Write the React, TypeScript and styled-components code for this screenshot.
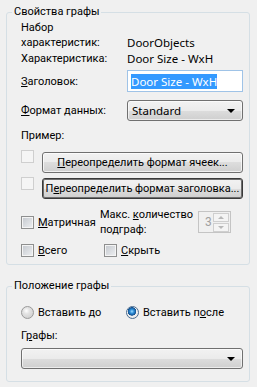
import styled, { createGlobalStyle } from "styled-components";

const GlobalStyle = createGlobalStyle`
  html, body {
    margin: 0;
    padding: 0;
    background: #f0f0f0;
  }
  body {
    font-family: Roboto, "Segoe UI", sans-serif;
    font-size: 11px;
    line-height: 15px;
    color: #000;
  }
`;

const Page = styled.div({
  width: '257px',
  height: '387px',
  boxSizing: 'border-box',
  paddingTop: '4px',
  display: 'flex',
  flexDirection: 'column',
  gap: '13px',
  overflow: 'hidden'
});

const Group = styled.fieldset<{ $bottom: number }>`
  margin: 0 7px 0 6px;
  padding: 0 6px ${p => p.$bottom}px 14px;
  border: 1px solid #d5dfe5;
  border-radius: 3px;
  min-width: 0;
  display: flex;
  flex-direction: column;
`;

const Legend = styled.legend({
  padding: '0 2px',
  marginLeft: '-9px',
  lineHeight: '16px'
});

const Row = styled.div<{ $top?: number; $align?: string }>`
  display: grid;
  grid-template-columns: 106px 1fr;
  align-items: ${p => p.$align ?? 'center'};
  margin-top: ${p => p.$top ?? 0}px;
`;

const Label = styled.div({
  whiteSpace: 'pre'
});

// latin values look wider in the original, so they get their own size
const Value = styled.span({
  fontFamily: '"Noto Sans", sans-serif',
  fontSize: '11.5px'
});

const Caption = styled.div<{ $top: number }>`
  margin-top: ${p => p.$top}px;
`;

const TextBox = styled.div({
  height: '22px',
  boxSizing: 'border-box',
  border: '1px solid #9fc3e7',
  background: '#fff',
  display: 'flex',
  alignItems: 'center',
  paddingLeft: '3px'
});

const Selected = styled(Value)({
  background: '#3399ff',
  color: '#fff',
  lineHeight: '15px'
});

const Combo = styled.div({
  height: '21px',
  boxSizing: 'border-box',
  border: '1px solid #707070',
  borderRadius: '3px',
  background: 'linear-gradient(#f2f2f2 0%, #ebebeb 50%, #dddddd 50%, #cfcfcf 100%)',
  boxShadow: 'inset 0 0 0 1px rgba(255,255,255,0.6)',
  display: 'flex',
  alignItems: 'center',
  justifyContent: 'space-between',
  padding: '0 7px 0 4px'
});

const Arrow = styled.span({
  width: '0',
  height: '0',
  borderLeft: '4px solid transparent',
  borderRight: '4px solid transparent',
  borderTop: '4px solid #000'
});

const SwatchRow = styled.div<{ $top: number; $btnTop: number }>`
  display: flex;
  align-items: flex-start;
  gap: 8px;
  margin-top: ${p => p.$top}px;
  & > button {
    margin-top: ${p => p.$btnTop}px;
  }
`;

const Swatch = styled.div({
  width: '13px',
  height: '13px',
  boxSizing: 'border-box',
  border: '1px solid #cfcfcf',
  background: '#f5f5f5',
  flex: 'none'
});

const Button = styled.button<{ $focused?: boolean }>`
  flex: 1;
  height: 21px;
  box-sizing: border-box;
  font: inherit;
  color: #000;
  padding: 0;
  border: 1px solid ${p => (p.$focused ? '#3a3a3a' : '#707070')};
  border-radius: 3px;
  background: linear-gradient(#f2f2f2 0%, #ebebeb 50%, #dddddd 50%, #cfcfcf 100%);
  box-shadow: inset 0 0 0 1px ${p => (p.$focused ? '#6e6e6e' : 'rgba(255,255,255,0.7)')};
  white-space: nowrap;
  overflow: hidden;
  text-align: center;
`;

const Check = styled.label({
  display: 'flex',
  alignItems: 'center',
  gap: '4px',
  whiteSpace: 'nowrap'
});

const Box = styled.span({
  width: '13px',
  height: '13px',
  boxSizing: 'border-box',
  border: '1px solid #8e8f8f',
  boxShadow: 'inset 0 0 0 1px #f4f4f4',
  background: 'linear-gradient(135deg, #c3c7cd, #eef0f2)',
  flex: 'none'
});

const Radio = styled.span<{ $checked?: boolean }>`
  width: 13px;
  height: 13px;
  box-sizing: border-box;
  border-radius: 50%;
  border: 1px solid ${p => (p.$checked ? '#4b6c8f' : '#9a9a9a')};
  background: ${p =>
    p.$checked
      ? 'radial-gradient(circle at 45% 40%, #9fdcff 0, #2e8ed8 2px, #13508f 4px, #f2f2f2 4.5px, #dcdcdc 100%)'
      : 'radial-gradient(circle at 40% 35%, #ffffff 0, #e4e4e4 3px, #c8c8c8 100%)'};
  flex: none;
`;

const OptionsRow = styled.div({
  display: 'grid',
  gridTemplateColumns: '79px 98px 33px',
  alignItems: 'center',
  marginTop: '8px'
});

const PairRow = styled.div<{ $col: number; $top: number }>`
  display: grid;
  grid-template-columns: ${p => p.$col}px 1fr;
  align-items: center;
  margin-top: ${p => p.$top}px;
`;

const Spin = styled.div({
  height: '22px',
  boxSizing: 'border-box',
  border: '1px solid #c4c4c4',
  background: '#f0f0f0',
  display: 'flex',
  alignItems: 'center',
  justifyContent: 'space-between',
  padding: '1px',
  color: '#a0a0a0',
  fontSize: '12px'
});

const SpinValue = styled.span({
  paddingLeft: '5px'
});

const SpinButtons = styled.div({
  display: 'flex',
  flexDirection: 'column',
  gap: '1px'
});

const SpinButton = styled.span<{ $up?: boolean }>`
  width: 16px;
  height: 9px;
  box-sizing: border-box;
  border: 1px solid #cfcfcf;
  background: #f4f4f4;
  display: flex;
  align-items: center;
  justify-content: center;
  &::after {
    content: '';
    border-left: 3px solid transparent;
    border-right: 3px solid transparent;
    ${p => (p.$up ? 'border-bottom' : 'border-top')}: 3px solid #b8b8b8;
  }
`;

const App = () => {
  return (
    <Page>
      <GlobalStyle />
      <Group $bottom={6}>
        <Legend>Свойства графы</Legend>
        <Row $align="end">
          <Label>{'Набор\nхарактеристик:'}</Label>
          <Value>DoorObjects</Value>
        </Row>
        <Row $top={1}>
          <Label>Характеристика:</Label>
          <Value>Door Size - WxH</Value>
        </Row>
        <Row $top={4}>
          <Label><u>З</u>аголовок:</Label>
          <TextBox>
            <Selected>Door Size - WxH</Selected>
          </TextBox>
        </Row>
        <Row $top={8}>
          <Label><u>Ф</u>ормат данных:</Label>
          <Combo>
            <Value>Standard</Value>
            <Arrow />
          </Combo>
        </Row>
        <Caption $top={7}>Пример:</Caption>
        <SwatchRow $top={7} $btnTop={2}>
          <Swatch />
          <Button><u>П</u>ереопределить формат ячеек...</Button>
        </SwatchRow>
        <SwatchRow $top={4} $btnTop={1}>
          <Swatch />
          <Button $focused>П<u>е</u>реопределить формат заголовка...</Button>
        </SwatchRow>
        <OptionsRow>
          <Check>
            <Box />
            <span><u>М</u>атричная</span>
          </Check>
          <Label>Макс. <u>к</u>оличество{'\n'}подграф:</Label>
          <Spin>
            <SpinValue>3</SpinValue>
            <SpinButtons>
              <SpinButton $up />
              <SpinButton />
            </SpinButtons>
          </Spin>
        </OptionsRow>
        <PairRow $col={83} $top={6}>
          <Check>
            <Box />
            <span><u>В</u>сего</span>
          </Check>
          <Check>
            <Box />
            <span><u>С</u>крыть</span>
          </Check>
        </PairRow>
      </Group>
      <Group $bottom={12}>
        <Legend>Положение графы</Legend>
        <PairRow $col={105} $top={11}>
          <Check>
            <Radio />
            <span>Вставить <u>д</u>о</span>
          </Check>
          <Check>
            <Radio $checked />
            <span>Вставить п<u>о</u>сле</span>
          </Check>
        </PairRow>
        <Caption $top={8}>Г<u>р</u>афы:</Caption>
        <Caption $top={5}>
          <Combo>
            <span />
            <Arrow />
          </Combo>
        </Caption>
      </Group>
    </Page>
  );
};

export default App;
